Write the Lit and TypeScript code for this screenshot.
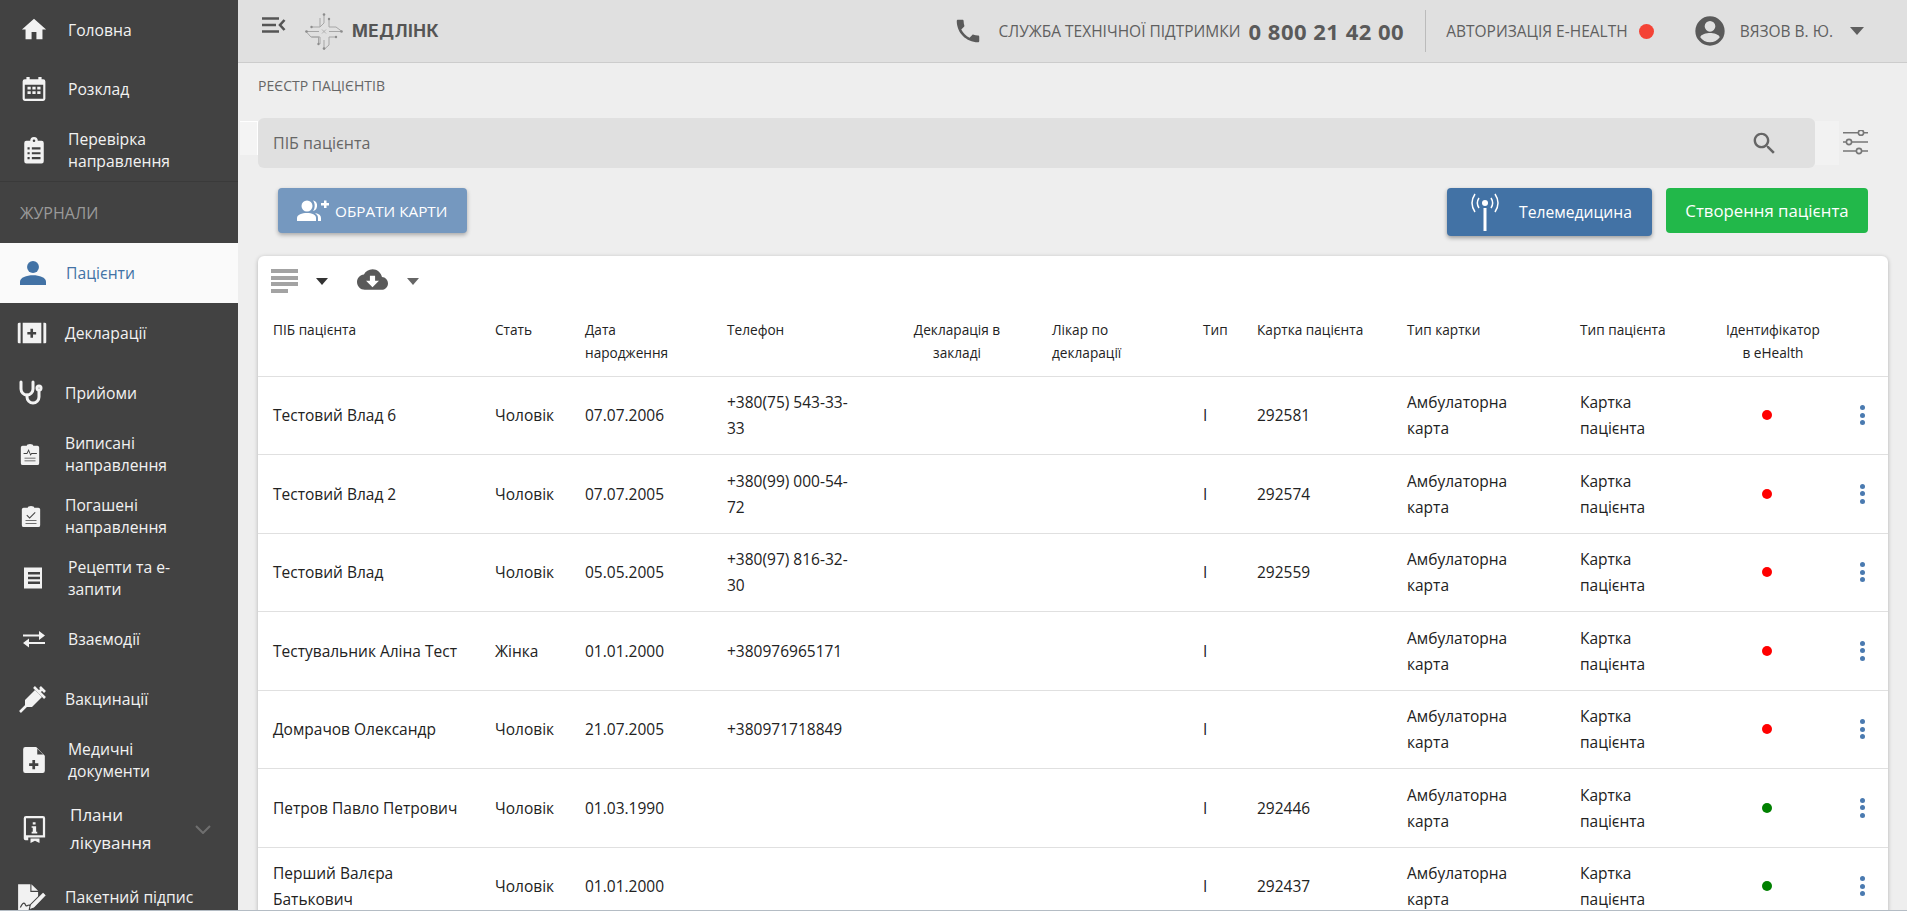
import { LitElement, html, css, svg } from "lit";
import { customElement } from "lit/decorators.js";

const P = (d: string) => svg`<path d=${d}></path>`;
const icons: Record<string, any> = {
  home: P("M10 20v-6h4v6h5v-8h3L12 3 2 12h3v8z"),
  calendar: svg`<path fill-rule="evenodd" d="M5 1h3v2h8V1h3v2h1.500A2 2 0 0 1 22.500 5v16a2 2 0 0 1-2 2h-17a2 2 0 0 1-2-2V5a2 2 0 0 1 2-2H5zM3.500 8v13h17V8zM6 10h3v2.500H6zm4.500 0h3v2.500h-3zm4.500 0h3v2.500h-3zM6 14h3v2.500H6zm4.500 0h3v2.500h-3zm4.500 0h3v2.500h-3z"></path>`,
  clip: svg`<path fill-rule="evenodd" d="M5 3h3.500a3.500 3.500 0 0 1 7 0H19a2 2 0 0 1 2 2v17a2 2 0 0 1-2 2H5a2 2 0 0 1-2-2V5a2 2 0 0 1 2-2zm7-1.200a1.200 1.200 0 1 0 0 2.400 1.200 1.200 0 0 0 0-2.400zM6 9v2h2V9zm4 0v2h8V9zm-4 4.500v2h2v-2zm4 0v2h8v-2zM6 18v2h2v-2zm4 0v2h8v-2z"></path>`,
  person: svg`<circle cx="12" cy="6.500" r="5.500"></circle><path d="M0 23v-3c0-4 6-6 12-6s12 2 12 6v3z"></path>`,
  decl: svg`<path fill-rule="evenodd" d="M0 2.500A1.500 1.500 0 0 1 1.500 1H3v20H1.500A1.500 1.500 0 0 1 0 19.500zM5 1h18v20H5zM25 1h1.500A1.500 1.500 0 0 1 28 2.500v17a1.500 1.500 0 0 1-1.500 1.500H25zM12.500 7v3h-3v2.500h3v3H15v-3h3V10h-3V7z"></path>`,
  check: svg`<path fill-rule="evenodd" d="M4 3h4.500a3.500 2 0 0 1 7 0H20a2 2 0 0 1 2 2v17a2 2 0 0 1-2 2H4a2 2 0 0 1-2-2V5a2 2 0 0 1 2-2zM7 11.500l.8-.8 2.700 2.700 5.700-5.700.8.8-6.500 6.500zM6 16.500v1h12v-1zm0 3v1h12v-1z"></path>`,
  vyp: svg`<path fill-rule="evenodd" d="M4 3h4.500a3.500 2 0 0 1 7 0H20a2 2 0 0 1 2 2v17a2 2 0 0 1-2 2H4a2 2 0 0 1-2-2V5a2 2 0 0 1 2-2zM5 11v1h4l1.500-3 2 5 1.500-2h5.500v-1h-6l-.8 1-2.200-5.500L8.500 11zM6 16v1h12v-1zm0 3v1h12v-1z"></path>`,
  rx: svg`<path fill-rule="evenodd" d="M2 1l1 1 1-1 1 1 1-1 1 1 1-1 1 1 1-1 1 1 1-1 1 1 1-1 1 1 1-1 1 1 1-1 1 1 1-1v22l-1-1-1 1-1-1-1 1-1-1-1 1-1-1-1 1-1-1-1 1-1-1-1 1-1-1-1 1-1-1-1 1-1-1-1 1zM6 6v2.500h12V6zm0 4.700v2.500h12v-2.500zm0 4.700v2.500h12v-2.500z"></path>`,
  doc: svg`<path fill-rule="evenodd" d="M4 0h10l8 8v14a2 2 0 0 1-2 2H4a2 2 0 0 1-2-2V2a2 2 0 0 1 2-2zm6.500 12v3h-3v2.500h3v3H13v-3h3V15h-3v-3zM15 1.500V7h5.500z"></path>`,
  book: svg`<path fill-rule="evenodd" d="M4 0h15a2 2 0 0 1 2 2v17H6v2.500H3.500A1.500 1.500 0 0 1 2 20V2a2 2 0 0 1 2-2zm0 2v15h15V2zm6 3.500v2h2.500v-2zm-1 3.500v1.500h1V14H9v1.500h5V14h-1V9zM8 20h8v4l-4-2-4 2z"></path>`,
  sign: svg`<path d="M1 0h11v7h7v5l-6 7-1 5H1z"></path><path d="M13 0l6 6h-6z"></path>
    <path d="M3 21c1.500-3 3-5 4-3.500s.5 2.500 2 2 2-1.500 3 0" fill="none" stroke="#424242" stroke-width="1.100"></path>
    <path d="M23.500 7l3 3-11 11.500-4.500 1.500 1-4.500z" stroke="#424242" stroke-width="1"></path>`,
  phone: P("M6.620 10.790c1.440 2.830 3.760 5.140 6.590 6.590l2.200-2.200c.27-.27.67-.36 1.020-.24 1.120.37 2.330.57 3.570.57.55 0 1 .45 1 1V20c0 .55-.45 1-1 1-9.390 0-17-7.610-17-17 0-.55.45-1 1-1h3.500c.55 0 1 .45 1 1 0 1.250.2 2.450.57 3.570.11.35.03.74-.25 1.020l-2.200 2.200z"),
  search: P("M15.500 14h-.79l-.28-.27C15.410 12.590 16 11.110 16 9.500 16 5.910 13.090 3 9.500 3S3 5.910 3 9.500 5.910 16 9.500 16c1.610 0 3.090-.59 4.230-1.570l.27.28v.79l5 4.990L20.490 19l-4.990-5zm-6 0C7.010 14 5 11.990 5 9.500S7.010 5 9.500 5 14 7.010 14 9.500 11.990 14 9.500 14z"),
  cloud: P("M19.350 10.040C18.670 6.590 15.640 4 12 4 9.110 4 6.600 5.640 5.350 8.040 2.340 8.360 0 10.910 0 14c0 3.310 2.690 6 6 6h13c2.760 0 5-2.240 5-5 0-2.640-2.050-4.780-4.650-4.960zM17 13l-5 5-5-5h3V9h4v4h3z"),
  account: svg`<path fill-rule="evenodd" d="M12 1a11 11 0 1 0 0 22 11 11 0 0 0 0-22zm0 3.500a4 4 0 1 1 0 8 4 4 0 0 1 0-8zm0 16c-3 0-5.800-1.500-7.300-3.800C5 14.500 9.500 13.500 12 13.500s7 1 7.300 3.200c-1.500 2.300-4.300 3.800-7.300 3.800z"></path>`,
  group: svg`<circle cx="10" cy="7" r="5.500"></circle><path d="M0 22v-3c0-3.500 5-5 10-5s9 1.500 9 5v3z"></path><path d="M16 1.500c3 .5 4.500 3 4 6s-2 4-4 4.500c2-2 2.500-7.500 0-10.500zM18 14c4 .5 6 2.500 6 5v3h-3v-3c0-2-1-3.500-3-5z"></path><path d="M24 4h3V1.500h2.500V4H32v2.500h-2.500V9H27V6.500h-3z"></path>`,
};

const ic = (name: string, w: number, h: number, vb = "0 0 24 24") =>
  html`<svg class="ico" width=${w} height=${h} viewBox=${vb} fill="currentColor">${icons[name]}</svg>`;

const stethoscope = html`<svg class="ico" width="26" height="26" viewBox="0 0 26 26" fill="none" stroke="currentColor" stroke-width="3" stroke-linecap="round">
  <path d="M3 2v7a6 6 0 0 0 12 0V2"></path><path d="M9 15v2a6 6 0 0 0 12 0v-6"></path><circle cx="21" cy="8" r="2"></circle></svg>`;
const swap = html`<svg class="ico" width="24" height="24" viewBox="0 0 24 24" fill="none" stroke="currentColor" stroke-width="2">
  <path d="M1 8.500h20"></path><path d="M23 16h-20"></path><path fill="currentColor" stroke="none" d="M17 4l6 4.500-6 4.500zM7 11.500L1 16l6 4.500z"></path></svg>`;
const syringe = html`<svg class="ico" width="28" height="28" viewBox="0 0 28 28" fill="currentColor" stroke="currentColor">
  <path stroke="none" d="M6 15L16 5l7 7-10 10H8l-2-2z"></path><path stroke-width="2.600" d="M15 2l11 11M21 2l5 5M23 4l-4 4M1 27l7-7"></path></svg>`;

type Item = { t: string[]; i: any; h: number; x: number; cx: number; active?: boolean; chev?: boolean };
const side: Item[] = [
  { t: ["Головна"], i: ic("home", 29, 29), h: 59, x: 68, cx: 34 },
  { t: ["Розклад"], i: ic("calendar", 26, 26), h: 60, x: 68, cx: 34 },
  { t: ["Перевірка", "направлення"], i: ic("clip", 26, 29), h: 62, x: 68, cx: 34 },
];
const side2: Item[] = [
  { t: ["Пацієнти"], i: ic("person", 26, 26), h: 60, x: 66, cx: 33, active: true },
  { t: ["Декларації"], i: ic("decl", 29, 24, "0 0 28 22"), h: 60, x: 65, cx: 32 },
  { t: ["Прийоми"], i: stethoscope, h: 60, x: 65, cx: 31 },
  { t: ["Виписані", "направлення"], i: ic("vyp", 22, 26), h: 62, x: 65, cx: 30 },
  { t: ["Погашені", "направлення"], i: ic("check", 22, 26), h: 62, x: 65, cx: 31 },
  { t: ["Рецепти та е-", "запити"], i: ic("rx", 24, 24), h: 62, x: 68, cx: 34 },
  { t: ["Взаємодії"], i: swap, h: 60, x: 68, cx: 34 },
  { t: ["Вакцинації"], i: syringe, h: 60, x: 65, cx: 33 },
  { t: ["Медичні", "документи"], i: ic("doc", 26, 30), h: 62, x: 68, cx: 34 },
  { t: ["Плани", "лікування"], i: ic("book", 27, 33), h: 76, x: 70, cx: 35, chev: true },
  { t: ["Пакетний підпис"], i: ic("sign", 30, 27, "0 0 27 24"), h: 60, x: 65, cx: 32 },
];

const rows = [
  ["Тестовий Влад 6", "Чоловік", "07.07.2006", "+380(75) 543-33-33", "292581", "red"],
  ["Тестовий Влад 2", "Чоловік", "07.07.2005", "+380(99) 000-54-72", "292574", "red"],
  ["Тестовий Влад", "Чоловік", "05.05.2005", "+380(97) 816-32-30", "292559", "red"],
  ["Тестувальник Аліна Тест", "Жінка", "01.01.2000", "+380976965171", "", "red"],
  ["Домрачов Олександр", "Чоловік", "21.07.2005", "+380971718849", "", "red"],
  ["Петров Павло Петрович", "Чоловік", "01.03.1990", "", "292446", "green"],
  ["Перший Валєра Батькович", "Чоловік", "01.01.2000", "", "292437", "green"],
];

const widths = [222, 90, 142, 187, 138, 151, 54, 150, 173, 145, 126, 52];

@customElement("app-root")
export class AppRoot extends LitElement {
  static styles = css`
    :host { display: block; height: 911px; overflow: hidden; font-family: "Open Sans", "Noto Sans", sans-serif; position: relative; }
    .page { display: flex; height: 910px; overflow: hidden; border-bottom: 1px solid #b4bcc4; background: #eee; }
    .side { width: 238px; flex: none; background: #424242; color: #f2f2f2; font-size: 15.700px; line-height: 22px; overflow: hidden; }
    .item { display: flex; align-items: center; position: relative; box-sizing: border-box; }
    .item.active { background: #fafafa; color: #4272a5; }
    .islot { position: absolute; top: 0; bottom: 0; display: flex; align-items: center; transform: translateX(-50%); }
    .ico { display: block; flex: none; }
    .label { position: relative; }
    .plans { line-height: 28px; font-size: 17px; }
    .chev { position: absolute; left: 195px; top: 50%; margin-top: -4px; }
    .sect { height: 62px; border-top: 1px solid #3a3a3a; box-sizing: border-box; padding: 20px 0 0 20px; color: #9a9a9a; font-size: 16px; }
    .main { flex: 1; min-width: 0; position: relative; }
    .top { height: 62px; box-sizing: content-box; background: #e0e0e0; border-bottom: 1px solid #ccc; display: flex; align-items: center; color: #555; }
    .menu { margin-left: 24px; margin-top: -12px; }
    .logo { margin-left: 19px; }
    .brand { margin-left: 9px; font-family: "Inter", sans-serif; font-weight: 700; font-size: 17px; letter-spacing: .5px; color: #555; }
    .sp { flex: 1; }
    .phone { margin-right: 15px; color: #5a5a5a; }
    .up { font-size: 15.500px; color: #5f5f5f; }
    .num { font-size: 22px; font-weight: 700; color: #5a5a5a; margin-left: 8px; letter-spacing: .5px; }
    .vsep { width: 1px; height: 42px; background: #bbb; margin: 0 20px 0 21px; }
    .rdot { width: 15px; height: 15px; border-radius: 50%; background: #f44336; margin: 0 40px 0 11px; }
    .acc { margin-right: 14px; color: #5a5a5a; }
    .tri { width: 0; height: 0; border-left: 7px solid transparent; border-right: 7px solid transparent; border-top: 8px solid #5f5f5f; margin: 0 43px 0 17px; }
    .crumb { font-size: 14px; color: #666; padding: 14px 0 0 20px; line-height: 18px; }
    .sr { display: flex; align-items: center; margin: 23px 0 0 20px; }
    .search { width: 1557px; height: 50px; background: #e0e0e0; border-radius: 6px; display: flex; align-items: center; padding: 0 36px 0 15px; box-sizing: border-box; color: #666; font-size: 16px; justify-content: space-between; }
    .sbox { width: 24px; height: 44px; background: #f2f2f2; margin-right: 3px; }
    .btns { display: flex; align-items: flex-start; margin: 20px 0 0 40px; }
    .btn { display: flex; align-items: center; color: #fff; border-radius: 4px; box-sizing: border-box; }
    .pick { width: 189px; height: 45px; background: #7598bf; box-shadow: 0 2px 4px rgba(0,0,0,.3); font-size: 15.300px; font-weight: 500; padding-left: 19px; gap: 6px; }
    .tele { margin-left: auto; width: 205px; height: 48px; background: #4272a5; box-shadow: 0 2px 4px rgba(0,0,0,.35); font-size: 15.700px; padding-left: 23px; gap: 19px; }
    .create { margin: 0 39px 0 14px; width: 202px; height: 45px; background: #22b84a; font-size: 16.800px; justify-content: center; }
    .card { margin: 20px 19px 0 20px; background: #fff; border-radius: 6px; box-shadow: 0 1px 4px rgba(0,0,0,.25); color: #222; }
    .tools { height: 62px; display: flex; align-items: flex-start; position: relative; color: #5a5a5a; }
    .bars { margin: 13px 0 0 13px; width: 27px; display: flex; flex-direction: column; gap: 2.700px; }
    .bars i { height: 4px; background: #a3a3a3; display: block; }
    .bars i:last-child { width: 17px; }
    .dt { width: 0; height: 0; border-left: 6.500px solid transparent; border-right: 6.500px solid transparent; border-top: 7px solid #333; margin: 22px 0 0 18px; }
    .dt.g { border-top-color: #666; margin-left: 19px; }
    .cl { margin: 8px 0 0 29px; }
    table { border-collapse: collapse; table-layout: fixed; width: 1630px; }
    th { font-weight: 400; font-size: 13.650px; line-height: 23px; text-align: left; padding: 0 15px 7.500px; vertical-align: top; height: 50px; box-sizing: content-box; }
    th.c { padding: 0 14px 7.500px; }
    th.decl { padding: 0 27px 7.500px 5px; }
    td { font-size: 15.500px; line-height: 26px; padding: 0 15px; height: 78.500px; box-sizing: border-box; }
    tr { border-bottom: 1px solid #e0e0e0; }
    .c { text-align: center; }
    .ph { max-width: 126px; display: block; }
    .nar { max-width: 120px; display: block; }
    .dot { display: block; width: 10px; height: 10px; border-radius: 50%; margin: 0 auto; position: relative; left: -6px; }
    .red { background: #f00; }
    .green { background: #008000; }
    .dots { display: flex; flex-direction: column; gap: 2.500px; align-items: center; }
    .dots i { width: 5px; height: 5px; border-radius: 50%; background: #4a7ab0; display: block; }
    td.m { padding: 0; }
    .notch { position: absolute; left: 2px; top: 121px; width: 17px; height: 33px; background: #f4f4f4; border-right: 1px solid #fff; border-top: 1px solid #fff; }
  `;

  private item(it: Item) {
    return html`<div class="item ${it.active ? "active" : ""}" style="height:${it.h}px;padding-left:${it.x}px">
      <div class="islot" style="left:${it.cx}px">${it.i}</div>
      <div class="label ${it.chev ? "plans" : ""}">${it.t.map((l) => html`<div>${l}</div>`)}</div>
      ${it.chev ? html`<svg class="chev" width="16" height="9" viewBox="0 0 16 9" fill="none" stroke="#6f6f6f" stroke-width="2"><path d="M1 1l7 7 7-7"></path></svg>` : ""}
    </div>`;
  }

  render() {
    return html`<div class="page">
      <aside class="side">
        ${side.map((i) => this.item(i))}
        <div class="sect">ЖУРНАЛИ</div>
        ${side2.map((i) => this.item(i))}
      </aside>
      <main class="main">
        <div class="top">
          <svg class="menu" width="24" height="16" viewBox="0 0 24 16" fill="none" stroke="#555" stroke-width="2.600"><path d="M0 1.500h17M0 8h14M0 14.500h17M22.500 3l-4.500 5 4.500 5"></path></svg>
          <svg class="logo" width="38" height="37" viewBox="0 0 38 37" fill="none" stroke="#a6a6a6" stroke-width="1">
            <path d="M19 1v9l-4 4H6.500M24 6v8h7M31 14l6 4.500H24M1 18.500h13M6.500 24H15v7M31 24h-7v8l-5 4.500V27M14 24l-8 0-5-5.500M15 5v9M13.500 31V24"></path>
            <path d="M17 16.500l4 4M21 16.500l-4 4" stroke-width=".8"></path>
            <g fill="#8c8c8c" stroke="none">
              <circle cx="19" cy="1.500" r="1.300"></circle><circle cx="19" cy="35.500" r="1.300"></circle>
              <circle cx="1.500" cy="18.500" r="1.300"></circle><circle cx="36.500" cy="18.500" r="1.300"></circle>
              <circle cx="24" cy="6" r="1.200"></circle><circle cx="6.500" cy="14" r="1.200"></circle>
              <circle cx="31" cy="24" r="1.200"></circle><circle cx="13.500" cy="31" r="1.200"></circle>
            </g>
          </svg>
          <span class="brand">МЕДЛІНК</span>
          <span class="sp"></span>
          <span class="phone">${ic("phone", 30, 30)}</span>
          <span class="up">СЛУЖБА ТЕХНІЧНОЇ ПІДТРИМКИ</span>
          <span class="num">0 800 21 42 00</span>
          <span class="vsep"></span>
          <span class="up">АВТОРИЗАЦІЯ E-HEALTH</span>
          <span class="rdot"></span>
          <span class="acc">${ic("account", 32, 32)}</span>
          <span class="up">ВЯЗОВ В. Ю.</span>
          <span class="tri"></span>
        </div>
        <div class="notch"></div>
        <div class="crumb">РЕЄСТР ПАЦІЄНТІВ</div>
        <div class="sr">
          <div class="search"><span>ПІБ пацієнта</span>${ic("search", 29, 29)}</div>
          <div class="sbox"></div>
          <svg width="26" height="26" viewBox="0 0 26 26" fill="none" stroke="#777" stroke-width="1.600">
            <path d="M1 2.700h15M22 2.700h4M1 12h3M10 12h16M1 21h13M20 21h6"></path>
            <circle cx="19" cy="2.700" r="2.600"></circle><circle cx="7" cy="12" r="2.600"></circle><circle cx="17" cy="21" r="2.600"></circle>
          </svg>
        </div>
        <div class="btns">
          <div class="btn pick">${ic("group", 32, 24, "0 0 32 24")}<span>ОБРАТИ КАРТИ</span></div>
          <div class="btn tele">
            <svg width="30" height="40" viewBox="0 0 30 40" fill="none" stroke="#fff" stroke-width="1.500" class="ico">
              <path d="M15 16v23" stroke-width="3"></path><circle cx="15" cy="11" r="3" fill="#fff" stroke="none"></circle>
              <path d="M9 6c-2 3-2 7 0 10M21 6c2 3 2 7 0 10M5 2c-4 6-4 12 0 18M25 2c4 6 4 12 0 18"></path>
            </svg>
            <span>Телемедицина</span>
          </div>
          <div class="btn create">Створення пацієнта</div>
        </div>
        <section class="card">
          <div class="tools">
            <div class="bars"><i></i><i></i><i></i><i></i></div>
            <span class="dt"></span>
            <span class="cl">${ic("cloud", 31, 31)}</span>
            <span class="dt g"></span>
          </div>
          <table>
            <colgroup>${widths.map((w) => html`<col style="width:${w}px" />`)}</colgroup>
            <thead><tr>
              <th>ПІБ пацієнта</th><th>Стать</th><th>Дата народження</th><th>Телефон</th>
              <th class="decl c">Декларація в закладі</th><th>Лікар по декларації</th><th>Тип</th><th>Картка пацієнта</th>
              <th>Тип картки</th><th>Тип пацієнта</th><th class="c">Ідентифікатор в eHealth</th><th></th>
            </tr></thead>
            <tbody>
              ${rows.map((r) => html`<tr>
                <td>${r[0]}</td><td>${r[1]}</td><td>${r[2]}</td><td><span class="ph">${r[3]}</span></td>
                <td></td><td></td><td>I</td><td>${r[4]}</td>
                <td><span class="nar">Амбулаторна карта</span></td><td>Картка пацієнта</td>
                <td><span class="dot ${r[5]}"></span></td>
                <td class="m"><div class="dots"><i></i><i></i><i></i></div></td>
              </tr>`)}
            </tbody>
          </table>
        </section>
      </main>
    </div>`;
  }
}
